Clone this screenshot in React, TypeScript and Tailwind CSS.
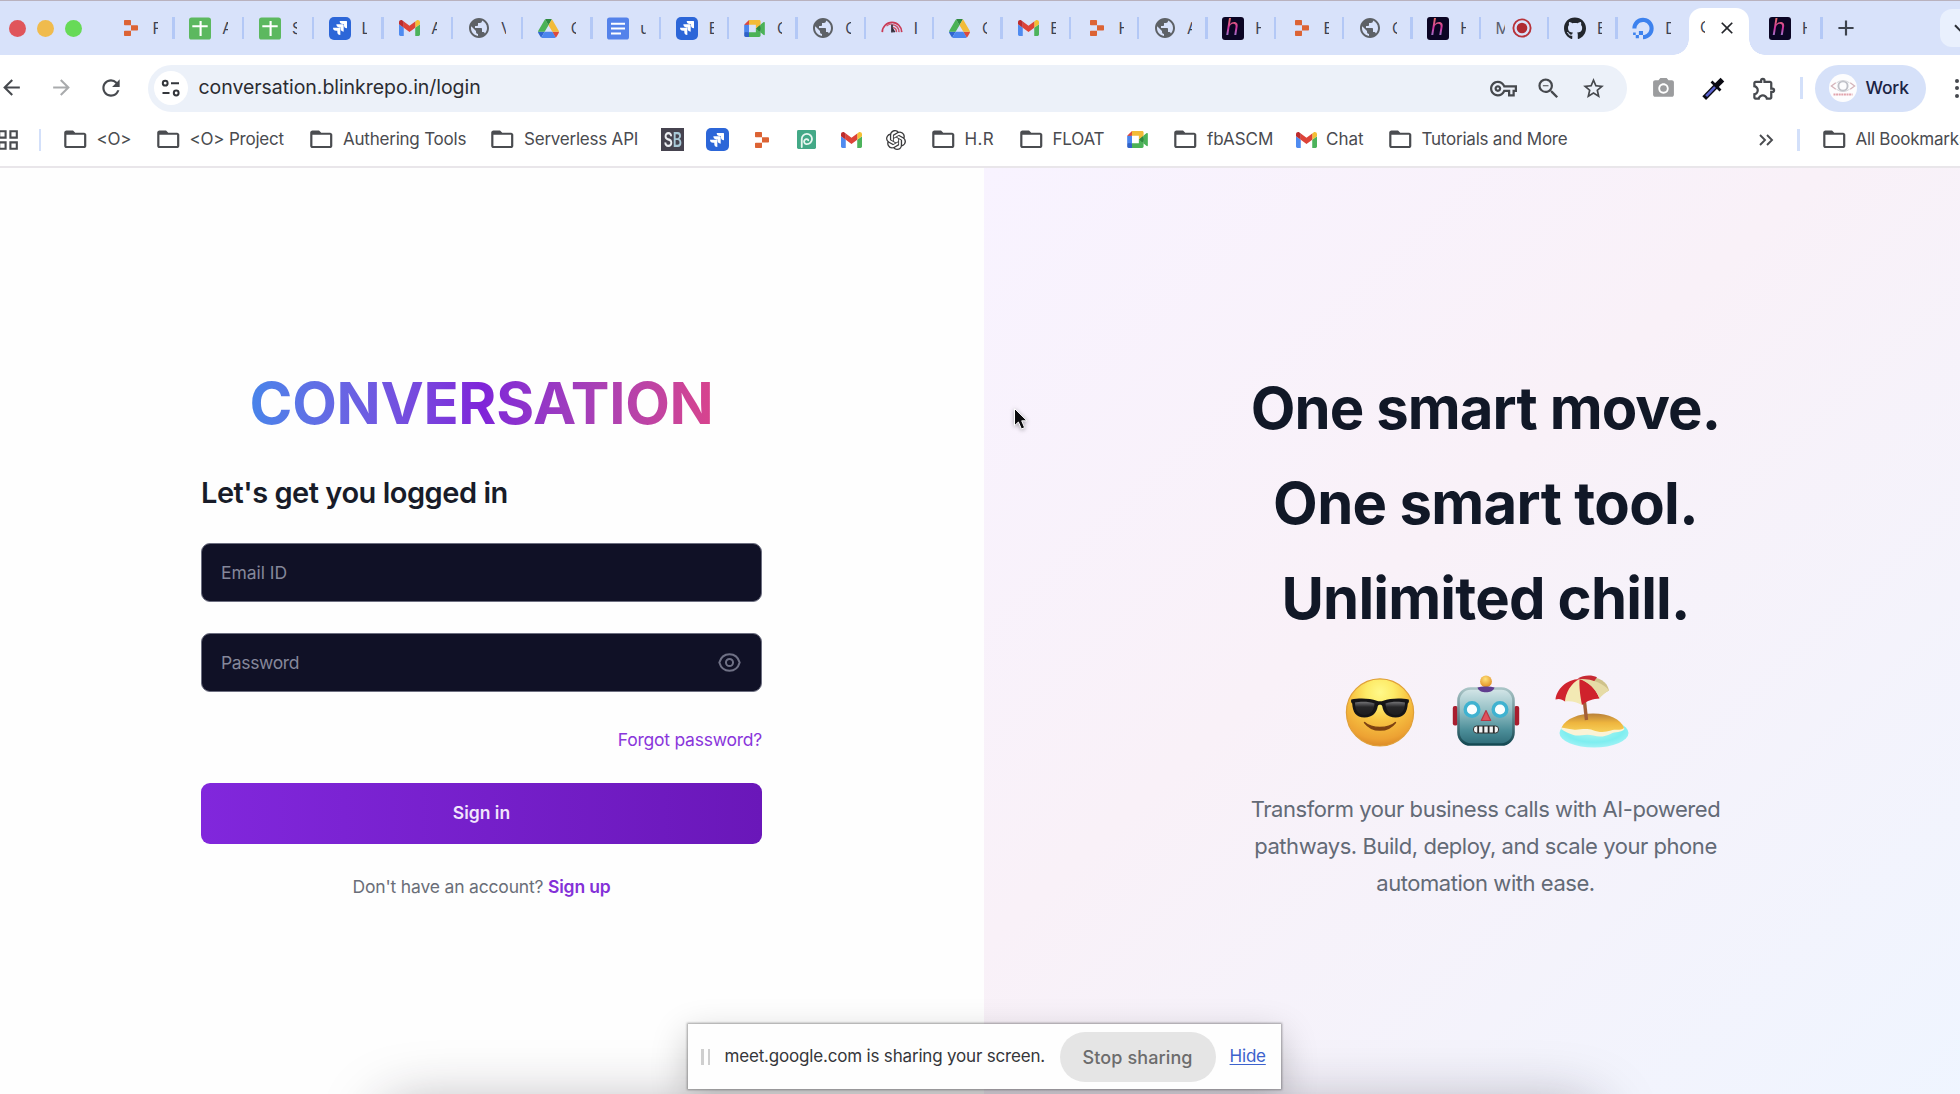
import type { ReactNode } from 'react';
import {
  MdArrowBack,
  MdArrowForward,
  MdRefresh,
  MdPublic,
  MdOutlineVpnKey,
  MdZoomOut,
  MdStarOutline,
  MdPhotoCamera,
  MdOutlineExtension,
  MdFolderOpen,
  MdAdd,
  MdClose,
} from 'react-icons/md';
import { SiJira, SiOpenai } from 'react-icons/si';
import { FaGithub, FaDigitalOcean } from 'react-icons/fa';

/* ---------- Site icons ---------- */

const Replit = () => (
  <svg viewBox="0 0 14 16" className="h-4 w-[14px]" fill="#dc6334">
    <path d="M.8 0h5.400a.8.8 0 0 1 .8.8V5.300H.8a.8.8 0 0 1-.8-.8V.8A.8.8 0 0 1 .8 0Z" />
    <path d="M7 5.300h6.200a.8.8 0 0 1 .8.8v3.700a.8.8 0 0 1-.8.8H7Z" />
    <path d="M.8 10.700H7v4.500a.8.8 0 0 1-.8.8H.8a.8.8 0 0 1-.8-.8v-3.700a.8.8 0 0 1 .8-.8Z" />
  </svg>
);

const Sheets = () => (
  <svg viewBox="0 0 22 22" className="size-[23px]">
    <rect width="22" height="22" rx="2.6" fill="#5cb85f" />
    <path d="M11.6 3.5v15M3.3 8.8h15.4" stroke="#fff" strokeWidth="2.1" />
  </svg>
);

const Jira = () => (
  <span className="flex size-[23px] items-center justify-center rounded-[5px] bg-[#2c66d8]">
    <SiJira className="size-[14px] text-white" />
  </span>
);

const Gmail = () => (
  <svg viewBox="52 42 88 66" className="h-4 w-[21px]">
    <path fill="#4f8bf0" d="M58 108h14V74L52 59v43c0 3.32 2.69 6 6 6" />
    <path fill="#4db35c" d="M120 108h14c3.32 0 6-2.69 6-6V59l-20 15" />
    <path fill="#f4bf35" d="M120 48v26l20-15v-8c0-7.42-8.47-11.65-14.4-7.2" />
    <path fill="#dd4338" d="M72 74V48l24 18 24-18v26L96 92" />
    <path fill="#bd2b2c" d="M52 51v8l20 15V48l-5.6-4.2c-5.94-4.45-14.4-.22-14.4 7.2" />
  </svg>
);

const Drive = () => (
  <svg viewBox="0 0 87.3 78" className="h-[19px] w-[21px]">
    <path fill="#2f66d0" d="m6.6 66.85 3.85 6.65c.8 1.4 1.95 2.5 3.3 3.3l13.75-23.8h-27.5c0 1.55.4 3.1 1.2 4.5z" />
    <path fill="#4bb257" d="m43.65 25-13.75-23.8c-1.35.8-2.5 1.9-3.3 3.3l-25.4 44a9.06 9.06 0 0 0 -1.2 4.5h27.5z" />
    <path fill="#dd4a3d" d="m73.55 76.8c1.35-.8 2.5-1.9 3.3-3.3l1.6-2.75 7.65-13.25c.8-1.4 1.2-2.95 1.2-4.5h-27.502l5.852 11.5z" />
    <path fill="#2f8a3f" d="m43.65 25 13.75-23.8c-1.35-.8-2.9-1.2-4.5-1.2h-18.5c-1.6 0-3.15.45-4.5 1.2z" />
    <path fill="#4c86ee" d="m59.8 53h-32.3l-13.75 23.8c1.35.8 2.9 1.2 4.5 1.2h50.8c1.6 0 3.15-.45 4.5-1.2z" />
    <path fill="#f2bb38" d="m73.4 26.5-12.7-22c-.8-1.4-1.95-2.5-3.3-3.3l-13.75 23.8 16.15 28h27.45c0-1.55-.4-3.1-1.2-4.5z" />
  </svg>
);

const Meet = () => (
  <svg viewBox="0 0 87.5 72" className="h-[17px] w-[21px]">
    <path fill="#2f8a3f" d="M49.5 36l8.53 9.75 11.47 7.33 2-17.02-2-16.64-11.69 6.44z" />
    <path fill="#2f62c8" d="M0 51.5V66c0 3.315 2.685 6 6 6h14.5l3-10.96-3-9.54-9.95-3z" />
    <path fill="#dd4a3d" d="M20.5 0L0 20.5l10.55 3 9.95-3 2.95-9.41z" />
    <path fill="#4c86ee" d="M20.5 20.5H0v31h20.5z" />
    <path fill="#4bb257" d="M82.6 8.68L69.5 19.42v33.66l13.16 10.79c1.97 1.54 4.85.135 4.85-2.37V11c0-2.535-2.945-3.925-4.91-2.32zM49.5 36v15.5h-29V72h43c3.315 0 6-2.685 6-6V53.08z" />
    <path fill="#f2bb38" d="M63.5 0h-43v20.5h29V36l20-16.57V6c0-3.315-2.685-6-6-6z" />
  </svg>
);

const Globe = () => <MdPublic className="size-6 shrink-0 text-[#5d6166]" />;

const Docs = () => (
  <svg viewBox="0 0 22 22" className="size-[23px]">
    <rect width="22" height="22" rx="2.6" fill="#5482ea" />
    <path d="M4 6.2h14M4 11h14M4 16h10" stroke="#fff" strokeWidth="2" />
  </svg>
);

const Gauge = () => (
  <svg viewBox="0 0 24 24" className="size-6" fill="none">
    <path d="M1.4 16.5A10.6 10.6 0 0 1 22.6 16.5" stroke="#c93a55" strokeWidth="1.9" />
    <path d="M12.5 8.4A7.6 7.6 0 0 1 19.6 16.5M13 11.4A4.6 4.6 0 0 1 16.8 16.5" stroke="#cc5068" strokeWidth="1.7" />
    <path d="M6 10A9 9 0 0 1 12 7.600" stroke="#d0566c" strokeWidth="1.200" />
    <path d="M12 8.200v8.600M12.200 12.400l2.600 4.200" stroke="#332c38" strokeWidth="1.900" />
  </svg>
);

const LetterH = () => (
  <span className="flex size-[23px] items-center justify-center rounded-[3px] bg-[#0b0524]">
    <span className="bg-linear-to-b from-[#ee7a50] via-[#cf2fa0] via-50% to-[#5a8be0] bg-clip-text pr-0.5 pb-px text-[23px] leading-[23px] font-normal text-transparent italic">
      h
    </span>
  </span>
);

const RecordDot = () => (
  <svg viewBox="0 0 20 20" className="size-5">
    <circle cx="10" cy="10" r="8.6" fill="none" stroke="#b8323a" strokeWidth="1.9" />
    <circle cx="10" cy="10" r="5.3" fill="#b02a31" />
  </svg>
);

const StoryBlock = () => (
  <span className="flex size-[23px] items-center justify-center bg-[#46434f]">
    <span className="flex scale-x-[.7] text-[20px] leading-none font-semibold">
      <span className="text-[#eceef2]">S</span>
      <span className="text-[#a9c9d8]">B</span>
    </span>
  </span>
);

const Spiral = () => (
  <svg viewBox="0 0 20 20" className="size-[19px]" fill="none">
    <rect width="20" height="20" rx="1.5" fill="#43a987" />
    <path
      d="M5 18V9.4a5.400 5.400 0 1 1 5.400 5.400 2.600 2.600 0 0 1-2.200-4.400c1.200-1.400 3.400-1 3.700.4"
      stroke="#e8f7f1"
      strokeWidth="1.900"
      strokeLinecap="round"
    />
  </svg>
);

/* ---------- Browser chrome ---------- */

type TabData = { icon: ReactNode; title: string };

const wideTabs: TabData[] = [
  { icon: <Replit />, title: 'F' },
  { icon: <Sheets />, title: 'A' },
  { icon: <Sheets />, title: 'S' },
  { icon: <Jira />, title: 'L' },
  { icon: <Gmail />, title: 'A' },
  { icon: <Globe />, title: 'V' },
  { icon: <Drive />, title: 'C' },
];

const tabs: TabData[] = [
  { icon: <Docs />, title: 'u' },
  { icon: <Jira />, title: 'E' },
  { icon: <Meet />, title: 'C' },
  { icon: <Globe />, title: 'C' },
  { icon: <Gauge />, title: 'I' },
  { icon: <Drive />, title: 'C' },
  { icon: <Gmail />, title: 'E' },
  { icon: <Replit />, title: 'H' },
  { icon: <Globe />, title: 'A' },
  { icon: <LetterH />, title: 'H' },
  { icon: <Replit />, title: 'E' },
  { icon: <Globe />, title: 'C' },
  { icon: <LetterH />, title: 'H' },
];

const Divider = () => <span className="h-[22px] w-[2.5px] shrink-0 bg-[#b3c8f6]" />;

function Tab({ icon, title, wide, last }: TabData & { wide?: boolean; last?: boolean }) {
  return (
    <div className={wide ? 'flex w-[69.7px] shrink-0 items-center pl-[15.5px]' : 'flex w-[68.33px] shrink-0 items-center pl-[15.5px]'}>
      <span className="flex w-[22px] shrink-0 items-center justify-center">{icon}</span>
      <span className="ml-[11px] w-[5.5px] overflow-hidden pt-px text-[15.5px] leading-5 text-[#3c4150]">{title}</span>
      {!last && (
        <span className="-mr-px ml-auto flex">
          <Divider />
        </span>
      )}
    </div>
  );
}

function TabStrip() {
  return (
    <div className="flex h-[55px] shrink-0 border-t border-[#b9b2be] bg-[#d8e2fa]">
      <div className="flex w-[104px] shrink-0 items-center gap-[11px] pt-px pl-[9px]">
        <span className="size-[17px] rounded-full bg-[#e0555b]" />
        <span className="size-[17px] rounded-full bg-[#f0bb4d]" />
        <span className="size-[17px] rounded-full bg-[#67da57]" />
      </div>
      {wideTabs.map((t, i) => (
        <Tab key={i} {...t} wide />
      ))}
      {tabs.map((t, i) => (
        <Tab key={i} {...t} />
      ))}
      <div className="flex w-[68.33px] shrink-0 items-center pl-[15.5px]">
        <span className="w-[9px] overflow-hidden pt-px text-[15.5px] leading-5 text-[#5a6070]">M</span>
        <span className="ml-[7px]">
          <RecordDot />
        </span>
        <span className="-mr-px ml-auto flex">
          <Divider />
        </span>
      </div>
      <Tab icon={<FaGithub className="size-[23px] text-[#22262c]" />} title="E" />
      <Tab icon={<FaDigitalOcean className="size-[23px] text-[#3d82ee]" />} title="D" last />
      <div className="flex w-[68.33px] shrink-0 items-end px-[4px]">
        <div className="relative flex h-[47px] w-full items-center rounded-t-[13px] bg-white pb-2 pl-[11px]">
          <span className="absolute bottom-0 -left-4 size-4 bg-[radial-gradient(circle_at_top_left,transparent_15.5px,white_16px)]" />
          <span className="absolute -right-4 bottom-0 size-4 bg-[radial-gradient(circle_at_top_right,transparent_15.5px,white_16px)]" />
          <span className="w-[5px] overflow-hidden pt-px text-[15.5px] leading-5 text-[#3c4150]">C</span>
          <MdClose className="ml-3 size-[20px] text-[#23252a]" />
        </div>
      </div>
      <Tab icon={<LetterH />} title="H" />
      <div className="flex w-12 shrink-0 items-center justify-center">
        <MdAdd className="size-[26px] text-[#3d434d]" />
      </div>
      <div className="mt-[8px] ml-[70px] flex h-[38px] w-[39px] shrink-0 items-center rounded-[12px] bg-[#e9f0fd] pl-[14px]">
        <svg viewBox="0 0 12 8" className="h-2 w-3" fill="none">
          <path d="M1 1.2 6 6.4l5-5.2" stroke="#2b2f36" strokeWidth="2" />
        </svg>
      </div>
    </div>
  );
}

function Toolbar() {
  return (
    <div className="flex h-[66px] shrink-0 items-center bg-white text-[#46494e]">
      <div className="-ml-[14px] flex shrink-0">
        <span className="flex w-[50px] justify-center">
          <MdArrowBack className="size-[25px]" />
        </span>
        <span className="flex w-[50px] justify-center">
          <MdArrowForward className="size-[25px] text-[#a9abad]" />
        </span>
        <span className="flex w-[50px] justify-center">
          <MdRefresh className="size-[26px]" />
        </span>
      </div>
      <div className="ml-3 flex h-[47px] w-[1479px] shrink-0 items-center rounded-full bg-[#ecf1f9] pr-[11px] pl-[6px]">
        <span className="flex size-[34px] items-center justify-center rounded-full bg-white">
          <svg viewBox="0 0 20 18" className="h-[18px] w-5" fill="none" stroke="#33363b" strokeWidth="2">
            <circle cx="4.2" cy="4.2" r="2.4" />
            <path d="M10 4.200h8M1.500 14h7" />
            <circle cx="15.2" cy="14" r="2.4" />
          </svg>
        </span>
        <span className="ml-[10.5px] text-[19.5px] tracking-[-0.05px] whitespace-nowrap text-[#2b2c31]">
          conversation.blinkrepo.in/login
        </span>
        <div className="ml-auto flex">
          <span className="flex w-[45px] items-center justify-center">
            <MdOutlineVpnKey className="size-[27px]" />
          </span>
          <span className="flex w-[45px] items-center justify-center">
            <MdZoomOut className="size-[27px]" />
          </span>
          <span className="flex w-[45px] items-center justify-center">
            <MdStarOutline className="size-[25px]" />
          </span>
        </div>
      </div>
      <div className="ml-[11px] flex shrink-0 items-center">
        <span className="flex w-[50.5px] justify-center">
          <MdPhotoCamera className="size-[25px] text-[#9b9c9e]" />
        </span>
        <span className="flex w-[50.5px] justify-center">
          <svg viewBox="0 0 24 24" className="size-[25px]" strokeLinecap="square">
            <path d="M4.800 19.400 14 10" stroke="#0a0a12" strokeWidth="5" />
            <path d="M5.800 18.400 12.800 11.200" stroke="#5a62cf" strokeWidth="2.400" />
            <path d="M11 6.200l6.800 6.800" stroke="#0a0a12" strokeWidth="2.600" />
            <path d="M16 8l2.800-2.800" stroke="#0a0a12" strokeWidth="5" />
          </svg>
        </span>
        <span className="flex w-[50.5px] justify-center">
          <MdOutlineExtension className="size-[27px]" />
        </span>
      </div>
      <span className="ml-[10.5px] h-[22px] w-[2.5px] shrink-0 bg-[#d3e0fa]" />
      <div className="ml-[12px] flex h-[47px] w-[111px] shrink-0 items-center rounded-full bg-[#d6e1f9] pl-[14px]">
        <svg viewBox="0 0 28 28" className="size-7" fill="none">
          <circle cx="14" cy="14" r="14" fill="#fdfdfe" />
          <path d="M6.8 8.8 2.4 12l4.4 3.2M21.2 8.8l4.4 3.2-4.4 3.2" stroke="#d5b4ba" strokeWidth="1.3" />
          <circle cx="14" cy="12" r="4.6" stroke="#bfc1c8" strokeWidth="1.9" />
          <path d="M7.5 8.8a11 11 0 0 1 13 0M7.5 15.3a11 11 0 0 0 13 0" stroke="#cdced4" strokeWidth=".9" />
          <path d="M4.5 20.4h19" stroke="#e2a3ac" strokeWidth="2" strokeDasharray="2 .6" />
        </svg>
        <span className="ml-[9px] text-[17.5px] tracking-[-0.2px] font-medium text-[#1b2344]">Work</span>
      </div>
      <div className="ml-[29px] flex shrink-0 flex-col gap-[3.5px]">
        <span className="size-1 rounded-full bg-[#46494e]" />
        <span className="size-1 rounded-full bg-[#46494e]" />
        <span className="size-1 rounded-full bg-[#46494e]" />
      </div>
    </div>
  );
}

function Folder({ children }: { children: ReactNode }) {
  return (
    <>
      <MdFolderOpen className="size-[26.5px] shrink-0 text-[#4a4c50]" />
      <span className="ml-[8.5px] whitespace-nowrap">{children}</span>
    </>
  );
}

function BookmarksBar() {
  return (
    <div className="flex h-[47px] shrink-0 items-start border-b-2 border-[#e9e6ea] bg-white text-[17px] leading-[37px] tracking-[-0.22px] text-[#4a4b50]">
      <div className="flex h-[37px] w-full items-center">
        <svg viewBox="0 0 20 20" className="-ml-[2px] size-5 shrink-0" fill="none" stroke="#4a4c50" strokeWidth="2.1">
          <path d="M1.2 1.2h6.4v6.4H1.2zM12.4 1.2h6.4v6.4h-6.4zM1.2 12.4h6.4v6.4H1.2zM12.4 12.4h6.4v6.4h-6.4z" />
        </svg>
        <span className="ml-[20.5px] h-[22px] w-[2.5px] shrink-0 bg-[#d3e0fa]" />
        <div className="ml-[20.5px] flex w-[93px] shrink-0 items-center"><Folder>&lt;O&gt;</Folder></div>
        <div className="flex w-[153.5px] shrink-0 items-center"><Folder>&lt;O&gt; Project</Folder></div>
        <div className="flex w-[181px] shrink-0 items-center"><Folder>Authering Tools</Folder></div>
        <div className="flex w-[172px] shrink-0 items-center"><Folder>Serverless API</Folder></div>
        <div className="flex w-[44.5px] shrink-0"><StoryBlock /></div>
        <div className="flex w-[49.5px] shrink-0"><Jira /></div>
        <div className="flex w-[42px] shrink-0"><Replit /></div>
        <div className="flex w-[43.5px] shrink-0"><Spiral /></div>
        <div className="flex w-[45px] shrink-0"><Gmail /></div>
        <div className="flex w-[44px] shrink-0"><SiOpenai className="size-[20px] text-[#3a3a3c]" /></div>
        <div className="flex w-[88px] shrink-0 items-center"><Folder><span className="tracking-[0.3px]">H.R</span></Folder></div>
        <div className="flex w-[109.5px] shrink-0 items-center"><Folder>FLOAT</Folder></div>
        <div className="flex w-[45px] shrink-0"><Meet /></div>
        <div className="flex w-[124px] shrink-0 items-center"><Folder><span className="tracking-[-0.05px]">fbASCM</span></Folder></div>
        <div className="flex w-[90.5px] shrink-0 items-center">
          <Gmail />
          <span className="ml-[9px] tracking-normal">Chat</span>
        </div>
        <div className="flex shrink-0 items-center"><Folder>Tutorials and More</Folder></div>
        <svg viewBox="0 0 16 12" className="ml-auto h-[12px] w-4 shrink-0" fill="none" stroke="#4a4c50" strokeWidth="1.9">
          <path d="m2 1 5 5-5 5M9 1l5 5-5 5" />
        </svg>
        <span className="ml-[23.5px] h-[22px] w-[2.5px] shrink-0 bg-[#d3e0fa]" />
        <div className="ml-[21px] flex w-[139.5px] shrink-0 items-center"><Folder>All Bookmarks</Folder></div>
      </div>
    </div>
  );
}

/* ---------- Login form ---------- */

function LoginPanel() {
  return (
    <div className="flex w-[984px] shrink-0 flex-col items-center bg-[#fefefe] pt-[205px] pr-[21px]">
      <div className="flex w-[561px] flex-col">
        <h1 className="text-center text-[58px] leading-[60px] font-bold tracking-[-0.31px]">
          <span className="bg-linear-to-r from-[#4784ea] via-[#7f24d9] to-[#d8438d] bg-clip-text text-transparent">
            CONVERSATION
          </span>
        </h1>
        <h2 className="mt-[39.5px] text-[29px] leading-10 font-semibold tracking-[-0.48px] text-[#181c29]">
          Let's get you logged in
        </h2>
        <div className="mt-[30px] flex h-[59px] items-center rounded-[9px] border border-[#6c6e80] bg-[#101126] px-[19px] pt-0.5 text-[17.5px] tracking-[-0.05px] text-[#85879a]">
          Email ID
        </div>
        <div className="mt-[31px] flex h-[59px] items-center justify-between rounded-[9px] border border-[#6c6e80] bg-[#101126] pr-5 pl-[19px] text-[17.5px] tracking-[-0.36px] text-[#85879a]">
          <span className="pt-0.5">Password</span>
          <svg viewBox="0 0 24 24" className="size-[23px]" fill="none" stroke="#6f7185" strokeWidth="2.1">
            <path d="M1.4 12C3 6.4 7.2 3.4 12 3.4S21 6.4 22.6 12c-1.600 5.600-5.800 8.600-10.600 8.600S3 17.600 1.400 12Z" />
            <circle cx="12" cy="12" r="3.7" />
          </svg>
        </div>
        <div className="mt-[36px] text-right text-[17.5px] leading-6 tracking-[-0.23px] text-[#8a36db]">
          Forgot password?
        </div>
        <div className="mt-[31px] flex h-[61px] items-center justify-center rounded-[9px] bg-linear-to-r from-[#8127dc] to-[#6a17b9] pt-px text-[17.5px] font-semibold text-[#f1e4fc]">
          Sign in
        </div>
        <div className="mt-[31px] text-center text-[17.5px] leading-6 tracking-[-0.18px] text-[#6a6e78]">
          Don't have an account? <span className="font-semibold text-[#8430d8]">Sign up</span>
        </div>
      </div>
    </div>
  );
}

/* ---------- Illustrations ---------- */

const Sunglasses = () => (
  <svg viewBox="0 0 76 76" className="size-[76px]" role="img" aria-label="Smiling face with sunglasses">
    <defs>
      <radialGradient id="face" cx=".5" cy=".2" r=".82">
        <stop offset="0" stopColor="#fff98a" />
        <stop offset=".25" stopColor="#fdeb68" />
        <stop offset=".5" stopColor="#f8c744" />
        <stop offset=".85" stopColor="#eda233" />
        <stop offset="1" stopColor="#d98726" />
      </radialGradient>
      <linearGradient id="lens" x1="0" y1="0" x2="0" y2="1">
        <stop offset="0" stopColor="#737376" />
        <stop offset=".4" stopColor="#262628" />
        <stop offset="1" stopColor="#1d1d1f" />
      </linearGradient>
    </defs>
    <circle cx="38" cy="38.4" r="33.6" fill="url(#face)" stroke="#e0a038" strokeWidth="1.2" />
    <path d="M22.500 48.500c4 5.400 9.400 7.600 15.500 7.600s11.500-2.200 15.500-7.600c-4 3.600-9.400 5-15.500 5s-11.500-1.400-15.500-5Z" fill="#7d4212" stroke="#7d4212" strokeWidth="1.4" strokeLinejoin="round" />
    <path d="M9.300 25.400c8-1.600 19-1.200 25.400 1.300 2 .7 4.600.7 6.600 0 6.400-2.500 17.400-2.900 25.400-1.300.5 1.700.3 3-.9 4-.5 8.500-3.600 14-12.300 14-8.500 0-12-4.600-13.300-11.400-.4-1.600-4-1.600-4.400 0-1.300 6.800-4.800 11.400-13.300 11.400-8.700 0-11.800-5.500-12.300-14-1.200-1-1.400-2.300-.9-4Z" fill="#151517" />
    <path d="M13 28.600c5.500-1.400 14.500-1.100 19.500.9-.3 6-3.600 11.500-9.800 11.500-7 0-9.700-5.500-9.700-12.400ZM63 28.600c-5.500-1.400-14.500-1.100-19.500.9.3 6 3.600 11.500 9.800 11.500 7 0 9.700-5.500 9.700-12.400Z" fill="url(#lens)" />
  </svg>
);

const Robot = () => (
  <svg viewBox="0 0 76 76" className="size-[76px]" role="img" aria-label="Robot">
    <defs>
      <linearGradient id="shell" x1="0" y1="0" x2="0" y2="1">
        <stop offset="0" stopColor="#d5e6e8" />
        <stop offset=".4" stopColor="#93bfc4" />
        <stop offset=".75" stopColor="#4b8d98" />
        <stop offset="1" stopColor="#2f6c78" />
      </linearGradient>
      <linearGradient id="rim" x1="0" y1="0" x2="0" y2="1">
        <stop offset="0" stopColor="#a9c4c6" />
        <stop offset="1" stopColor="#144953" />
      </linearGradient>
      <radialGradient id="knob" cx=".45" cy=".3" r=".7">
        <stop offset="0" stopColor="#ffe27a" />
        <stop offset="1" stopColor="#e08d22" />
      </radialGradient>
    </defs>
    <rect x="4.8" y="32" width="5" height="19.5" rx="2" fill="#a81d2e" />
    <rect x="66.2" y="32" width="5" height="19.5" rx="2" fill="#a81d2e" />
    <circle cx="38" cy="7.4" r="5.9" fill="url(#knob)" />
    <rect x="10.5" y="14.500" width="55" height="56" rx="12" fill="url(#shell)" stroke="url(#rim)" strokeWidth="2.6" />
    <path d="M29.500 13.500c2.500-1.500 14.500-1.500 17 0-1 3.300-4.500 4.800-8.500 4.800s-7.500-1.500-8.500-4.800Z" fill="#5f3d8f" />
    <circle cx="24" cy="35.500" r="6.800" fill="#fbffff" stroke="#3fb2d0" strokeWidth="3.4" />
    <circle cx="52" cy="35.500" r="6.800" fill="#fbffff" stroke="#3fb2d0" strokeWidth="3.4" />
    <path d="M38 36.500 42.700 46.500h-9.400Z" fill="#e0525c" stroke="#b83745" strokeWidth="1.2" strokeLinejoin="round" />
    <rect x="25.500" y="52" width="25" height="7" rx="3" fill="#f3f5f5" stroke="#333" strokeWidth="1" />
    <path d="M30.200 52v7M35.400 52v7M40.600 52v7M45.800 52v7" stroke="#2a2a2a" strokeWidth="1.8" />
  </svg>
);

const Beach = () => (
  <svg viewBox="0 0 76 76" className="size-[76px]" role="img" aria-label="Beach with umbrella">
    <defs>
      <radialGradient id="sea" cx=".5" cy=".4" r=".6">
        <stop offset="0" stopColor="#b9f7f0" />
        <stop offset=".7" stopColor="#7eeef0" />
        <stop offset="1" stopColor="#9ff2f5" />
      </radialGradient>
      <linearGradient id="sand" x1="0" y1="0" x2="0" y2="1">
        <stop offset="0" stopColor="#b9813a" />
        <stop offset=".5" stopColor="#eeb53e" />
        <stop offset="1" stopColor="#f7cf58" />
      </linearGradient>
    </defs>
    <ellipse cx="41" cy="59" rx="34.500" ry="14.500" fill="url(#sea)" />
    <path d="M8 55C15 46 26 41 40 40.500c16-.4 28 5.500 31.500 14.500-3 4-9 2-14 5-5 2.500-11 3.500-17 1.500-9-2.500-14 1.500-20-.5-5-1.500-8-3-12.500-6Z" fill="#fbf3d6" />
    <path d="M8.500 53.500C13 44.500 26 39.500 40 39.500c16 0 28 5.500 31 14.500-4 3-9 .8-13 2.500-6 2-12 2-18-.3-8-2.700-14 .3-20-.7-5-.8-8-1-11.500-2Z" fill="url(#sand)" />
    <path d="M30.500 19 33.500 46" stroke="#a35f38" strokeWidth="3.400" />
    <path d="M26.500 5C36-.5 54 4 56 16.500l-8 4.500Z" fill="#cfc28a" />
    <path d="M24.500 4.500c6-3.500 14-4 19.500-1.200l-3 4.200Z" fill="#c72a33" />
    <path d="M26.500 5C13 5.500 3.500 15.500 2.500 25.500c3-1.200 6.500-.6 9.500 2Z" fill="#d0242e" />
    <path d="M26.500 5C18 9 12.500 19 12 27.500c5.500-1 12 .5 17 3.500Z" fill="#f3e9b4" />
    <path d="M26.500 5c-.5 8 1 19 2.500 26 5-4.500 11.500-6.200 17.500-6.500C43 15 35.500 8 26.500 5Z" fill="#cf222c" />
    <path d="M26.500 5c9 3 16.500 10 20 19.500 1.800-2.500 5.500-5.800 9.500-8C51 9.500 39 4.500 26.500 5Z" fill="#e6dba6" />
  </svg>
);

function HeroPanel() {
  return (
    <div className="flex flex-1 overflow-hidden">
      <div className="flex w-[1003px] shrink-0 flex-col items-center bg-linear-to-br from-[#f8f3ff] via-[#f9f1f8] via-42% to-[#eff5ff] pt-[193px]">
        <h2 className="text-center text-[58px] leading-[95px] font-bold tracking-[-0.8px] whitespace-nowrap text-[#111827]">
          <span className="block tracking-[-0.9px]">One smart move.</span>
          <span className="block tracking-[-0.67px]">One smart tool.</span>
          <span className="block">Unlimited chill.</span>
        </h2>
        <div className="mt-[28px] flex gap-[29.5px]">
          <Sunglasses />
          <Robot />
          <Beach />
        </div>
        <p className="mt-[41px] text-center text-[22px] leading-[37px] tracking-[-0.45px] whitespace-nowrap text-[#636a76]">
          Transform your business calls with AI-powered
          <br />
          pathways. Build, deploy, and scale your phone
          <br />
          automation with ease.
        </p>
      </div>
    </div>
  );
}

/* ---------- Overlays ---------- */

function ShareBar() {
  return (
    <>
      <div className="absolute top-[1116px] left-[390px] h-10 w-[1200px] rounded-full shadow-[0_0_60px_10px_rgba(30,25,40,.36)]" />
      <div className="absolute top-[1024px] left-[688px] flex h-[65px] w-[593px] items-center bg-[#fefefe] pl-[13px] shadow-[0_0_2px_1px_rgba(60,60,60,.45),0_12px_36px_2px_rgba(0,0,0,.2)]">
        <span className="flex gap-[4px]">
          <span className="h-4 w-[2.5px] bg-[#cfcfcf]" />
          <span className="h-4 w-[2.5px] bg-[#cfcfcf]" />
        </span>
        <span className="ml-[14.5px] pt-px text-[17px] tracking-[-0.18px] whitespace-nowrap text-[#35363a]">
          meet.google.com is sharing your screen.
        </span>
        <span className="ml-[14.5px] flex h-[50px] w-[156px] shrink-0 items-center justify-center rounded-full bg-[#e5e5e5] pt-px text-[18px] tracking-[0.1px] font-medium text-[#6c6c6c]">
          Stop sharing
        </span>
        <span className="ml-[14px] pt-px text-[17px] tracking-[-0.22px] text-[#3c62cd] underline underline-offset-2">Hide</span>
      </div>
    </>
  );
}

const Cursor = () => (
  <svg viewBox="0 0 16 24" className="absolute top-[407px] left-[1013px] h-6 w-4 drop-shadow-[0_1px_2px_rgba(0,0,0,.35)]">
    <path d="M1.500 1.500v17.200l3.900-3.700 3 7 3.200-1.400-2.900-6.800h5.300Z" fill="#0c0c0e" stroke="#fff" strokeWidth="1" />
  </svg>
);

export default function App() {
  return (
    <div className="relative flex h-[1094px] w-[1960px] flex-col overflow-hidden bg-white font-['Inter',sans-serif]">
      <TabStrip />
      <Toolbar />
      <BookmarksBar />
      <div className="flex flex-1">
        <LoginPanel />
        <HeroPanel />
      </div>
      <Cursor />
      <ShareBar />
    </div>
  );
}
